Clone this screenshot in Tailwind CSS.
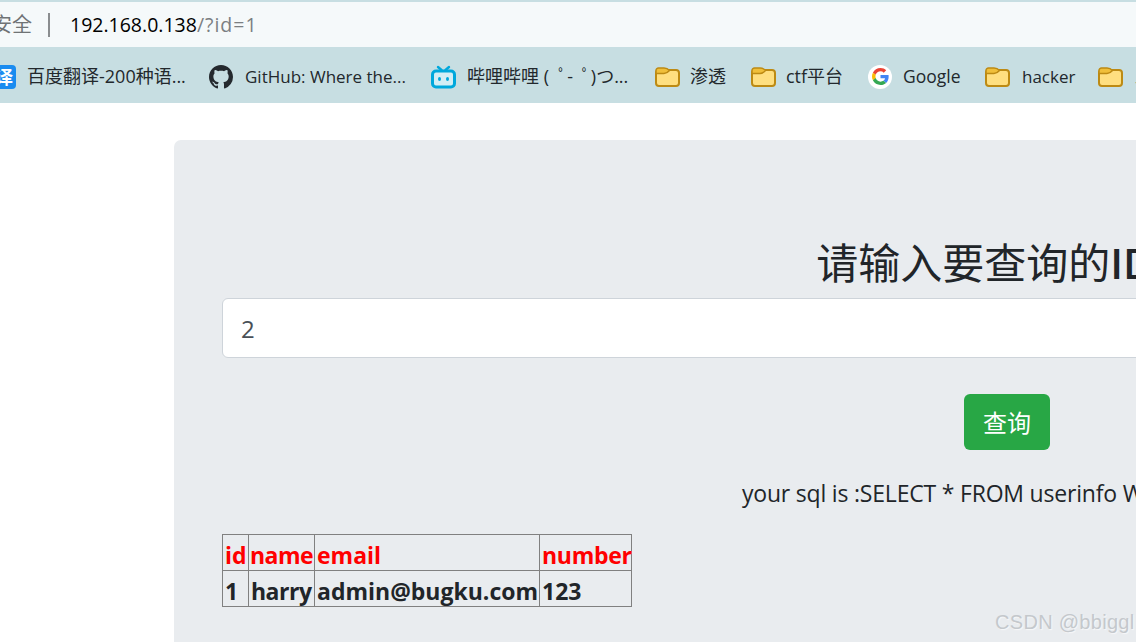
<!DOCTYPE html>
<html lang="en">

<head>
  <meta charset="UTF-8" />
  <title>SQL query</title>
  <script src="https://cdn.jsdelivr.net/npm/@tailwindcss/browser@4"></script>
</head>

<body class="bg-white w-[1136px] h-[642px] overflow-hidden relative text-[#212529] font-['Open_Sans','Noto_Sans_CJK_SC',sans-serif]">
  <!-- Browser chrome -->
  <div class="bg-[#c7dee2] pt-[2px]">
    <div class="bg-[#f5f9fa] h-[45px] flex items-center text-[20px] whitespace-nowrap overflow-hidden">
      <span class="text-[#6f7375] ml-[-8px] w-[40px] shrink-0">安全</span>
      <span class="w-[2px] h-[24px] bg-[#8a8d8f] ml-[16px] mr-[20px] shrink-0"></span>
      <span class="text-black text-[19.5px]">192.168.0.138<span class="text-[#7b7f82] tracking-[1px]">/?id=1</span></span>
    </div>
    <div class="h-[56px] flex items-center gap-[24px] pt-[3px] text-[18px] text-[#22282c] whitespace-nowrap overflow-hidden">
      <div class="flex items-center gap-[11px] ml-[-8px] shrink-0">
        <span class="w-[24px] h-[24px] rounded-[4px] bg-[#1a8cf0] text-white text-[18px] leading-[24px] text-center font-bold">译</span>
        <span class="w-[158px]">百度翻译-200种语...</span>
      </div>
      <div class="flex items-center gap-[12px] shrink-0">
        <svg class="w-[24px] h-[24px]" viewBox="0 0 16 16" fill="#24292e"><path d="M8 0C3.58 0 0 3.58 0 8c0 3.54 2.29 6.53 5.47 7.59.4.07.55-.17.55-.38 0-.19-.01-.82-.01-1.49-2.01.37-2.53-.49-2.69-.94-.09-.23-.48-.94-.82-1.13-.28-.15-.68-.52-.01-.53.63-.01 1.08.58 1.23.82.72 1.21 1.87.87 2.33.66.07-.52.28-.87.51-1.07-1.78-.2-3.64-.89-3.64-3.95 0-.87.31-1.59.82-2.15-.08-.2-.36-1.02.08-2.12 0 0 .67-.21 2.2.82.64-.18 1.32-.27 2-.27s1.36.09 2 .27c1.53-1.04 2.2-.82 2.2-.82.44 1.1.16 1.92.08 2.12.51.56.82 1.27.82 2.15 0 3.07-1.87 3.75-3.65 3.95.29.25.54.73.54 1.48 0 1.07-.01 1.93-.01 2.2 0 .21.15.46.55.38A8.01 8.01 0 0 0 16 8c0-4.42-3.58-8-8-8z"/></svg>
        <span class="w-[162px] text-[17px]">GitHub: Where the...</span>
      </div>
      <div class="flex items-center gap-[11px] shrink-0">
        <svg class="w-[25px] h-[24px]" viewBox="0 0 25 24" fill="none" stroke="#00a8dc"><path stroke-width="2.4" stroke-linecap="round" d="M7 2l3.5 3M18 2l-3.5 3"/><rect x="1.5" y="6" width="22" height="16" rx="3.5" fill="#d3eef5" stroke-width="3"/><ellipse cx="8.5" cy="14" rx="1.5" ry="2" fill="#00a8dc" stroke="none"/><ellipse cx="16.5" cy="14" rx="1.5" ry="2" fill="#00a8dc" stroke="none"/></svg>
        <span class="w-[164px]">哔哩哔哩 (&nbsp;&nbsp;ﾟ-&nbsp;&nbsp;ﾟ)つ...</span>
      </div>
      <div class="flex items-center gap-[10px] shrink-0">
        <svg class="w-[25px] h-[20px]" viewBox="0 0 25 20"><rect x="1" y="3" width="23" height="16" rx="3" fill="#ffdf80" stroke="#bd8a13" stroke-width="2"/><path d="M1 6.5V3.5A2.5 2.5 0 0 1 3.5 1H9c2 0 4 .8 5.5 2.5C13 5.2 11 6.5 9 6.5z" fill="#f0bf3a" stroke="#bd8a13" stroke-width="1.5"/></svg>
        <span class="w-[37px]">渗透</span>
      </div>
      <div class="flex items-center gap-[10px] shrink-0">
        <svg class="w-[25px] h-[20px]" viewBox="0 0 25 20"><rect x="1" y="3" width="23" height="16" rx="3" fill="#ffdf80" stroke="#bd8a13" stroke-width="2"/><path d="M1 6.5V3.5A2.5 2.5 0 0 1 3.5 1H9c2 0 4 .8 5.5 2.5C13 5.2 11 6.5 9 6.5z" fill="#f0bf3a" stroke="#bd8a13" stroke-width="1.5"/></svg>
        <span class="w-[58px]">ctf平台</span>
      </div>
      <div class="flex items-center gap-[11px] shrink-0">
        <span class="w-[24px] h-[24px] rounded-full bg-white flex items-center justify-center">
          <svg class="w-[17px] h-[17px]" viewBox="0 0 48 48"><path fill="#EA4335" d="M24 9.5c3.54 0 6.71 1.22 9.21 3.6l6.85-6.85C35.9 2.38 30.47 0 24 0 14.62 0 6.51 5.38 2.56 13.22l7.98 6.19C12.43 13.72 17.74 9.5 24 9.5z"/><path fill="#4285F4" d="M46.98 24.55c0-1.57-.15-3.09-.38-4.55H24v9.02h12.94c-.58 2.96-2.26 5.48-4.78 7.18l7.73 6c4.51-4.18 7.09-10.36 7.09-17.65z"/><path fill="#FBBC05" d="M10.53 28.59c-.48-1.45-.76-2.99-.76-4.59s.27-3.14.76-4.59l-7.98-6.19C.92 16.46 0 20.12 0 24c0 3.88.92 7.54 2.56 10.78l7.97-6.19z"/><path fill="#34A853" d="M24 48c6.48 0 11.93-2.13 15.89-5.81l-7.73-6c-2.15 1.45-4.92 2.3-8.16 2.3-6.26 0-11.57-4.22-13.47-9.91l-7.98 6.19C6.51 42.62 14.62 48 24 48z"/></svg>
        </span>
        <span class="w-[58px] text-[17.5px]">Google</span>
      </div>
      <div class="flex items-center gap-[12px] shrink-0">
        <svg class="w-[25px] h-[20px]" viewBox="0 0 25 20"><rect x="1" y="3" width="23" height="16" rx="3" fill="#ffdf80" stroke="#bd8a13" stroke-width="2"/><path d="M1 6.5V3.5A2.5 2.5 0 0 1 3.5 1H9c2 0 4 .8 5.5 2.5C13 5.2 11 6.5 9 6.5z" fill="#f0bf3a" stroke="#bd8a13" stroke-width="1.5"/></svg>
        <span class="w-[52px] text-[17px]">hacker</span>
      </div>
      <div class="flex items-center gap-[12px] shrink-0">
        <svg class="w-[25px] h-[20px]" viewBox="0 0 25 20"><rect x="1" y="3" width="23" height="16" rx="3" fill="#ffdf80" stroke="#bd8a13" stroke-width="2"/><path d="M1 6.5V3.5A2.5 2.5 0 0 1 3.5 1H9c2 0 4 .8 5.5 2.5C13 5.2 11 6.5 9 6.5z" fill="#f0bf3a" stroke="#bd8a13" stroke-width="1.5"/></svg>
        <span>工具</span>
      </div>
    </div>
  </div>

  <!-- Query card -->
  <div class="ml-[174px] mt-[37px] w-[1666px] bg-[#e9ecef] rounded-[7px] px-[48px] pt-[98px] pb-[48px]">
    <h3 class="text-[42px] leading-[50px] mb-[10px] pr-[2px] text-center whitespace-nowrap">请输入要查询的<span class="font-semibold">ID</span>：</h3>
    <div class="h-[60px] bg-white border border-[#ced4da] rounded-[6px] px-[18px] pt-[1px] flex items-center text-[24px] text-[#495057]">2</div>
    <div class="mt-[36px] flex justify-center">
      <button class="w-[86px] h-[56px] pt-[2px] bg-[#28a745] text-white text-[24px] rounded-[6px]">查询</button>
    </div>
    <p class="mt-[25px] mx-auto w-[530px] text-[23px] leading-[36px] tracking-[-0.2px] whitespace-nowrap">your sql is :SELECT * FROM userinfo WHERE id='2'</p>
    <table class="mt-[23px] w-[409px] table-fixed border-collapse text-[23px] leading-[30px] font-bold">
      <tr class="text-[#ff0000]">
        <th class="border border-[#808080] w-[26px] pl-[2px] pt-[5px] text-left font-bold">id</th>
        <th class="border border-[#808080] w-[66px] pl-[1px] pt-[5px] text-left font-bold tracking-[-0.5px]">name</th>
        <th class="border border-[#808080] w-[225px] pl-[2px] pt-[5px] text-left font-bold">email</th>
        <th class="border border-[#808080] w-[92px] pl-[2px] pt-[5px] text-left font-bold tracking-[-0.3px]">number</th>
      </tr>
      <tr>
        <td class="border border-[#808080] pl-[2px] pt-[5px]">1</td>
        <td class="border border-[#808080] pl-[2px] pt-[5px] tracking-[-0.5px]">harry</td>
        <td class="border border-[#808080] pl-[2px] pt-[5px]">admin@bugku.com</td>
        <td class="border border-[#808080] pl-[2px] pt-[5px]">123</td>
      </tr>
    </table>
  </div>

  <!-- Watermark -->
  <div class="absolute left-[995px] top-[609px] text-[20px] leading-[26px] tracking-[0.3px] whitespace-nowrap text-[#c4c8cc] [text-shadow:1px_1px_1px_#f7f8f9] font-['Liberation_Sans',sans-serif]">CSDN @bbiggl</div>
</body>

</html>
